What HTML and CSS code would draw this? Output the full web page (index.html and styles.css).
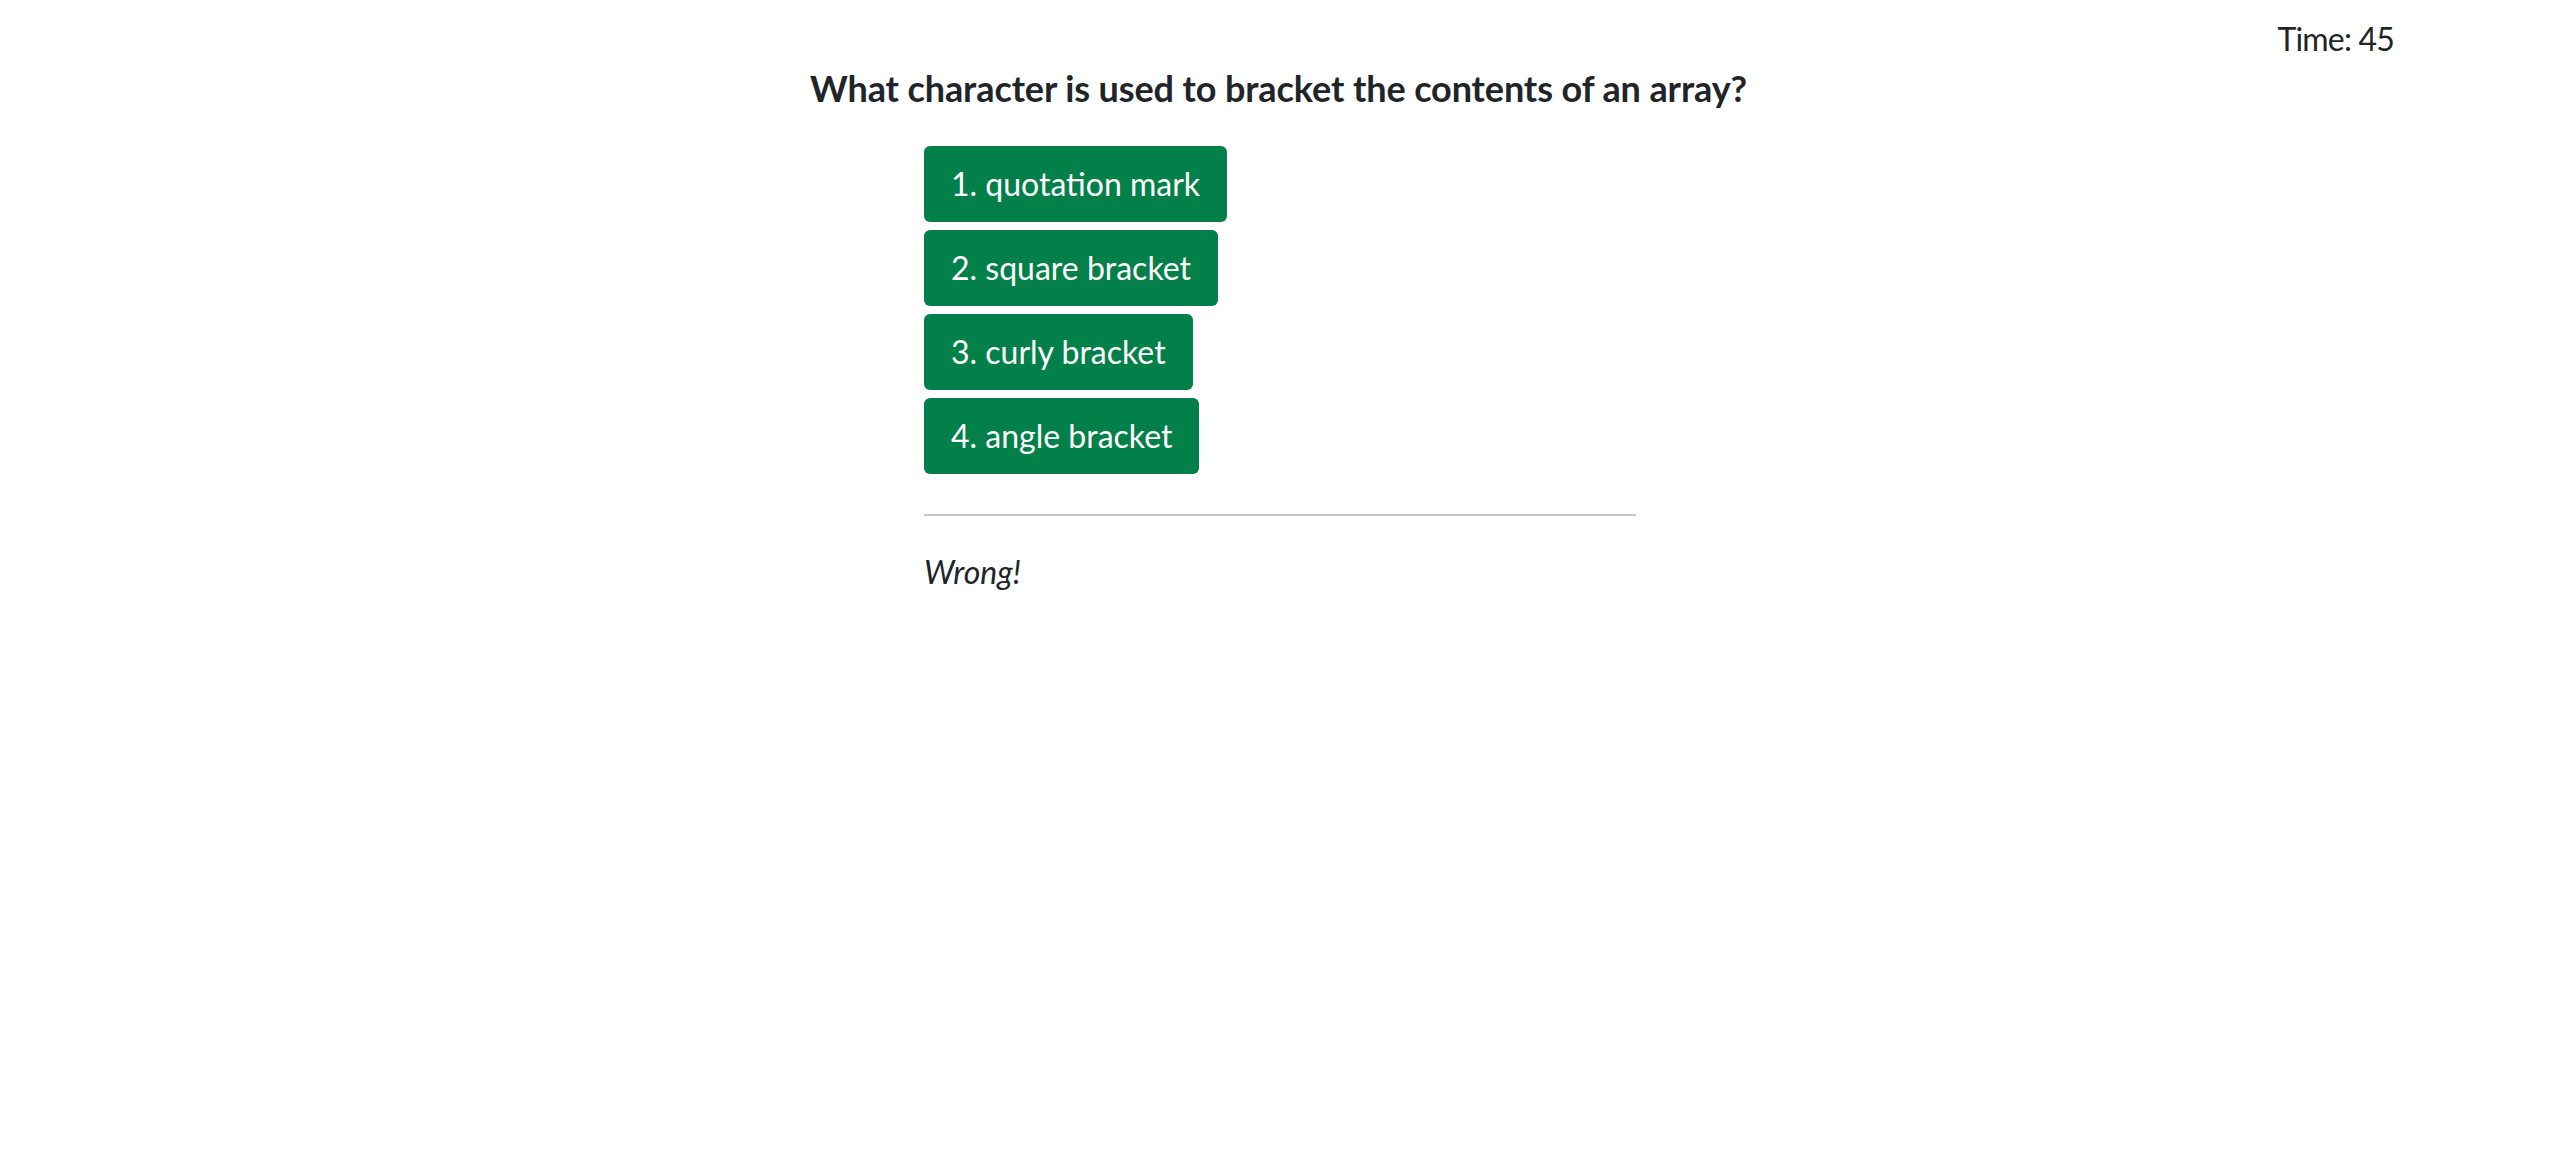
FILE: index.html
```html
<!DOCTYPE html>
<html lang="en">
<head>
<meta charset="utf-8">
<title>Quiz</title>
<link rel="stylesheet" href="styles.css">
</head>
<body>
<header class="top-bar">
  <span class="timer">Time: 45</span>
</header>
<main class="quiz">
  <h1 class="question">What character is used to bracket the contents of an array?</h1>
  <section class="answers">
    <div class="choices">
      <button class="choice">1. quotation mark</button>
      <button class="choice">2. square bracket</button>
      <button class="choice">3. curly bracket</button>
      <button class="choice">4. angle bracket</button>
    </div>
    <hr class="divider">
    <p class="feedback">Wrong!</p>
  </section>
</main>
</body>
</html>
```
FILE: styles.css
```css
* { box-sizing: border-box; }
html, body { margin: 0; padding: 0; background: #ffffff; }
body {
  font-family: "Lato", "Liberation Sans", sans-serif;
  color: #212529;
}
.top-bar {
  display: flex;
  justify-content: flex-end;
  padding: 15px 161px 0 0;
}
.timer {
  font-size: 32px;
  line-height: 48px;
  letter-spacing: -0.8px;
}
.quiz {
  display: flex;
  flex-direction: column;
  align-items: center;
  padding-left: 5px;
}
.question {
  margin: 4px 3px 0 0;
  font-size: 36px;
  line-height: 1.2;
  font-weight: 700;
  letter-spacing: -0.1px;
  text-align: center;
}
.answers {
  width: 712px;
  margin-top: 36px;
}
.choices {
  display: flex;
  flex-direction: column;
  align-items: flex-start;
  gap: 8px;
}
.choice {
  font-family: inherit;
  font-size: 32px;
  line-height: 48px;
  padding: 14px 27px;
  border: 0;
  border-radius: 6px;
  background: #03804a;
  color: #ffffff;
  cursor: pointer;
}
.divider {
  margin: 40px 0 0;
  border: 0;
  border-top: 2px solid #c8c8c8;
  height: 0;
}
.feedback {
  margin: 32px 0 0;
  font-size: 32px;
  line-height: 48px;
  font-style: italic;
}
```
